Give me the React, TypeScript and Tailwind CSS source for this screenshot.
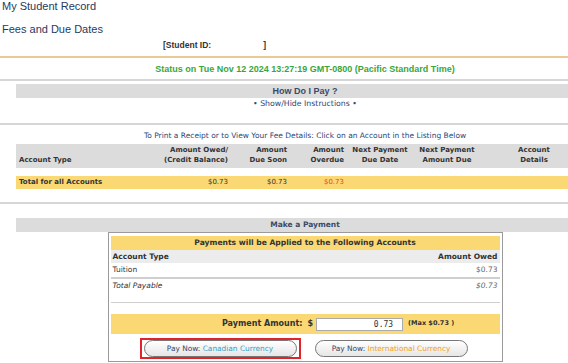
import React from "react"

const cols = "grid grid-cols-[144px_71px_59px_57px_66px_68px_106px]"

function PayButton({ label, color }: { label: string; color: string }) {
  return (
    <button className="h-[17px] w-[153px] rounded-full border border-[#777] bg-gradient-to-b from-white to-[#e6e6e6] text-[7.4px] leading-none text-[#34466a]">
      Pay Now: <span className={color}>{label}</span>
    </button>
  )
}

export default function App() {
  return (
    <div className="h-[363px] w-[568px] overflow-hidden bg-white font-['Liberation_Sans',sans-serif]">
      <div className="w-[610px]">
        {/* page titles */}
        <div className="pl-[2px] text-[11px] leading-[13px] text-[#1f3a62]">My Student Record</div>
        <div className="mt-[10px] pl-[2px] text-[11px] leading-[13px] text-[#1f3a62]">Fees and Due Dates</div>
        <div className="mt-[4px] pl-[163px] text-[8.5px] font-bold leading-[10px] text-[#333]">
          [Student ID:<span className="inline-block w-[55px] text-right">]</span>
        </div>
        <div className="mt-[6px] h-[2px] bg-[#ebc995]" />

        {/* status */}
        <div className="mt-[6px] text-center text-[9px] font-bold leading-[10px] text-[#3aa63a]">
          Status on Tue Nov 12 2024 13:27:19 GMT-0800 (Pacific Standard Time)
        </div>
        <div className="mt-[5px] h-[2px] bg-[#d6d6d6]" />

        {/* how do I pay */}
        <div className="mx-[16px] mt-[3px] h-[14px] bg-[#dcdcdc] text-center text-[9px] font-bold leading-[14px] text-[#3b4a68]">
          How Do I Pay ?
        </div>
        <div className="mt-[1px] text-center font-['DejaVu_Sans',sans-serif] text-[7.8px] leading-[10px] text-[#2c4774]">
          • Show/Hide Instructions •
        </div>
        <div className="mt-[14px] h-[2px] bg-[#d6d6d6]" />

        {/* account table */}
        <div className="mt-[6px] text-center font-['DejaVu_Sans',sans-serif] text-[7.5px] leading-[10px] text-[#2c4774]">
          To Print a Receipt or to View Your Fee Details: Click on an Account in the Listing Below
        </div>
        <div className="mx-[16px] mt-[3px] font-['DejaVu_Sans',sans-serif] text-[7px] text-[#333]">
          <div className={`${cols} h-[24px] items-end bg-[#dcdcdc] pb-[3px] font-bold leading-[10px]`}>
            <div className="pl-[3px]">Account Type</div>
            <div className="pr-[3px] text-right">Amount Owed/<br />(Credit Balance)</div>
            <div className="pr-[3px] text-right">Amount<br />Due Soon</div>
            <div className="pr-[3px] text-right">Amount<br />Overdue</div>
            <div className="text-center">Next Payment<br />Due Date</div>
            <div className="text-center">Next Payment<br />Amount Due</div>
            <div className="text-center">Account<br />Details</div>
          </div>
          <div className={`${cols} mt-[8px] h-[13px] items-center bg-[#fad974] leading-[13px]`}>
            <div className="pl-[3px] font-bold">Total for all Accounts</div>
            <div className="pr-[3px] text-right">$0.73</div>
            <div className="pr-[3px] text-right">$0.73</div>
            <div className="pr-[3px] text-right text-[#f0401a]">$0.73</div>
            <div />
            <div />
            <div />
          </div>
        </div>
        <div className="mt-[13px] h-[2px] bg-[#d6d6d6]" />

        {/* make a payment */}
        <div className="mx-[16px] mt-[14px] h-[14px] bg-[#dcdcdc] text-center font-['DejaVu_Sans',sans-serif] text-[7.5px] font-bold leading-[14px] text-[#3b4a68]">
          Make a Payment
        </div>
        <div className="mx-auto w-[395px] border border-[#9a9a9a] p-[2px] pt-[3px] font-['DejaVu_Sans',sans-serif] text-[7.5px] text-[#333]">
          <div className="h-[14px] bg-[#fad974] text-center text-[7.6px] font-bold leading-[14px]">
            Payments will be Applied to the Following Accounts
          </div>
          <div className="flex h-[13px] items-center justify-between bg-[#ececec] px-[2px] font-bold">
            <span>Account Type</span>
            <span>Amount Owed</span>
          </div>
          <div className="flex h-[14px] items-center justify-between px-[2px]">
            <span>Tuition</span>
            <span className="text-[#666]">$0.73</span>
          </div>
          <div className="h-[2px] bg-[#cfcfcf]" />
          <div className="flex h-[23px] items-start justify-between px-[2px] pt-[2px] italic leading-[10px]">
            <span>Total Payable</span>
            <span className="text-[#666]">$0.73</span>
          </div>
          <div className="h-[1px] bg-[#cfcfcf]" />
          <div className="mt-[11px] flex h-[20px] items-center bg-[#fad974] font-bold">
            <span className="w-[192px] text-right text-[8px]">Payment Amount:</span>
            <span className="ml-[5px] text-[8px]">$</span>
            <input
              readOnly
              value="0.73"
              className="ml-[3px] h-[13px] w-[87px] border border-[#aaa] bg-white pr-[9px] text-right font-['DejaVu_Sans_Mono',monospace] text-[8px] font-normal text-[#333]"
            />
            <span className="ml-[5px] text-[6.5px]">(Max $0.73 )</span>
          </div>
          <div className="mt-[4px] flex items-center gap-[14px] pl-[29px]">
            <div className="border-2 border-[#e0252a] px-[2px]">
              <PayButton label="Canadian Currency" color="text-[#35a2c6]" />
            </div>
            <PayButton label="International Currency" color="text-[#f2a024]" />
          </div>
        </div>
      </div>
    </div>
  )
}
